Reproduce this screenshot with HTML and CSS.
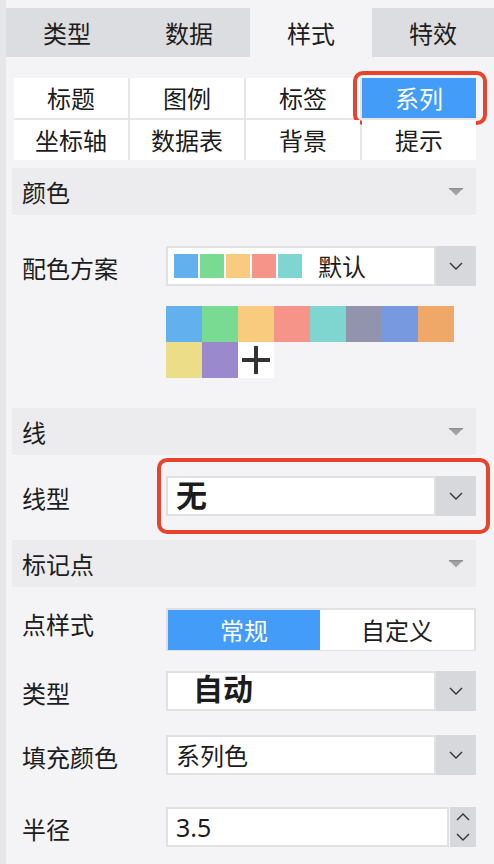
FILE: index.html
```html
<!DOCTYPE html>
<html lang="zh-CN">
<head>
<meta charset="utf-8">
<title>系列样式</title>
<link rel="stylesheet" href="styles.css">
</head>
<body>
<div class="app">
  <div class="top-tabs">
    <div class="top-tab">类型</div>
    <div class="top-tab">数据</div>
    <div class="top-tab active">样式</div>
    <div class="top-tab">特效</div>
  </div>
  <div class="panel">
    <div class="sub-tabs">
      <div class="sub-tab">标题</div>
      <div class="sub-tab">图例</div>
      <div class="sub-tab">标签</div>
      <div class="sub-tab active">系列<span class="mark mark-tab"></span></div>
      <div class="sub-tab">坐标轴</div>
      <div class="sub-tab">数据表</div>
      <div class="sub-tab">背景</div>
      <div class="sub-tab">提示</div>
    </div>

    <div class="section-head sh-color">
      <span>颜色</span>
      <svg class="tri" width="16" height="8" viewBox="0 0 16 8"><polygon points="1,0.5 15,0.5 8,7.5" fill="#a3a3a5"/><rect x="1" y="0" width="14" height="1.5" fill="#8f8f91"/></svg>
    </div>

    <div class="row row-scheme">
      <span class="label">配色方案</span>
      <div class="select">
        <div class="select-box scheme-box">
          <span class="sw sw-1"></span><span class="sw sw-2"></span><span class="sw sw-3"></span><span class="sw sw-4"></span><span class="sw sw-5"></span>
          <span class="scheme-name">默认</span>
        </div>
        <div class="select-btn">
          <svg width="14" height="8" viewBox="0 0 14 8"><polyline points="1,1 7,7 13,1" fill="none" stroke="#333" stroke-width="1.4"/></svg>
        </div>
      </div>
    </div>

    <div class="palette">
      <span class="pc sw-1"></span><span class="pc sw-2"></span><span class="pc sw-3"></span><span class="pc sw-4"></span>
      <span class="pc sw-5"></span><span class="pc sw-6"></span><span class="pc sw-7"></span><span class="pc sw-8"></span>
      <span class="pc sw-9"></span><span class="pc sw-10"></span>
      <span class="pc add">
        <svg width="28" height="28" viewBox="0 0 28 28"><rect x="0" y="12" width="28" height="4" fill="#333"/><rect x="12" y="0" width="4" height="28" fill="#333"/></svg>
      </span>
    </div>

    <div class="section-head sh-line">
      <span>线</span>
      <svg class="tri" width="16" height="8" viewBox="0 0 16 8"><polygon points="1,0.5 15,0.5 8,7.5" fill="#a3a3a5"/><rect x="1" y="0" width="14" height="1.5" fill="#8f8f91"/></svg>
    </div>

    <div class="row row-linetype">
      <span class="label">线型</span>
      <div class="select">
        <div class="select-box"><span class="val-big val-none">无</span></div>
        <div class="select-btn">
          <svg width="14" height="8" viewBox="0 0 14 8"><polyline points="1,1 7,7 13,1" fill="none" stroke="#333" stroke-width="1.4"/></svg>
        </div>
        <span class="mark mark-select"></span>
      </div>
    </div>

    <div class="section-head sh-marker">
      <span>标记点</span>
      <svg class="tri" width="16" height="8" viewBox="0 0 16 8"><polygon points="1,0.5 15,0.5 8,7.5" fill="#a3a3a5"/><rect x="1" y="0" width="14" height="1.5" fill="#8f8f91"/></svg>
    </div>

    <div class="row row-pointstyle">
      <span class="label label-top">点样式</span>
      <div class="segmented">
        <div class="seg active">常规</div>
        <div class="seg">自定义</div>
      </div>
    </div>

    <div class="row row-type">
      <span class="label">类型</span>
      <div class="select">
        <div class="select-box"><span class="val-big val-auto">自动</span></div>
        <div class="select-btn">
          <svg width="14" height="8" viewBox="0 0 14 8"><polyline points="1,1 7,7 13,1" fill="none" stroke="#333" stroke-width="1.4"/></svg>
        </div>
      </div>
    </div>

    <div class="row row-fill">
      <span class="label">填充颜色</span>
      <div class="select">
        <div class="select-box"><span class="val">系列色</span></div>
        <div class="select-btn">
          <svg width="14" height="8" viewBox="0 0 14 8"><polyline points="1,1 7,7 13,1" fill="none" stroke="#333" stroke-width="1.4"/></svg>
        </div>
      </div>
    </div>

    <div class="row row-radius">
      <span class="label">半径</span>
      <div class="number">
        <div class="number-box"><span class="val num">3.5</span></div>
        <div class="spinner">
          <svg width="14" height="8" viewBox="0 0 14 8"><polyline points="1,7 7,1 13,7" fill="none" stroke="#333" stroke-width="1.4"/></svg>
          <svg width="14" height="8" viewBox="0 0 14 8"><polyline points="1,1 7,7 13,1" fill="none" stroke="#333" stroke-width="1.4"/></svg>
        </div>
      </div>
    </div>
  </div>
</div>
</body>
</html>
```

FILE: styles.css
```css
* { box-sizing: border-box; }

html, body {
  margin: 0;
  padding: 0;
  background: #f4f4f6;
}

body {
  font-family: "Noto Sans CJK SC", "Noto Sans", "Liberation Sans", sans-serif;
  color: #1c1c1c;
  font-size: 24px;
}

.app {
  border-left: 6px solid #e7e7e9;
  padding-top: 8px;
  min-height: 864px;
}

.top-tabs {
  display: grid;
  grid-template-columns: repeat(4, 1fr);
  height: 49px;
}

.top-tab {
  background: #dcdde0;
  display: flex;
  align-items: center;
  justify-content: center;
  font-size: 24px;
  line-height: 1;
}

.top-tab.active {
  background: #f4f4f6;
}

.panel {
  padding: 21px 18px 0 6px;
}

.sub-tabs {
  margin-left: 2px;
  display: grid;
  grid-template-columns: repeat(4, 1fr);
  grid-auto-rows: 40px;
  gap: 2px;
  background: #e6e6e8;
}

.sub-tab {
  background: #ffffff;
  display: flex;
  align-items: center;
  justify-content: center;
  font-size: 24px;
  line-height: 1;
  position: relative;
}

.sub-tab.active {
  background: #429cf8;
  color: #ffffff;
}

.mark {
  position: absolute;
  border: 4px solid #e8432d;
  border-radius: 10px;
  pointer-events: none;
}

.mark-tab {
  top: -7px;
  left: -9px;
  right: -11px;
  bottom: -7px;
}

.mark-select {
  top: -18px;
  left: -9px;
  right: -14px;
  bottom: -18px;
}

.section-head {
  height: 47px;
  background: #ececee;
  display: flex;
  align-items: center;
  justify-content: space-between;
  padding: 0 12px 0 10px;
  font-size: 24px;
  line-height: 1;
}

.sh-color { margin-top: 8px; }
.sh-line { margin-top: 30px; }
.sh-marker { margin-top: 24px; }

.row {
  display: flex;
  align-items: center;
}

.label {
  width: 154px;
  padding-left: 10px;
  font-size: 24px;
  line-height: 1;
  flex: none;
  position: relative;
  top: 2px;
}

.label-top {
  align-self: flex-start;
  top: 4px;
}

.row-scheme { margin-top: 31px; }
.row-linetype { margin-top: 21px; }
.row-pointstyle { margin-top: 21px; }
.row-type { margin-top: 20px; }
.row-fill { margin-top: 24px; }
.row-radius { margin-top: 32px; }

.select {
  width: 310px;
  height: 40px;
  display: flex;
  position: relative;
}

.select-box {
  flex: 1;
  background: #ffffff;
  border: 2px solid #e1e1e3;
  display: flex;
  align-items: center;
  padding-left: 8px;
}

.select-btn {
  width: 40px;
  background: #d7d8db;
  display: flex;
  align-items: center;
  justify-content: center;
}

.scheme-box {
  padding-left: 6px;
  gap: 2px;
}

.sw {
  width: 24px;
  height: 24px;
  flex: none;
}

.sw-1 { background: #62b0ed; }
.sw-2 { background: #78db91; }
.sw-3 { background: #f8cb7f; }
.sw-4 { background: #f7948a; }
.sw-5 { background: #7fd6d0; }
.sw-6 { background: #9293ad; }
.sw-7 { background: #7799e0; }
.sw-8 { background: #f0a868; }
.sw-9 { background: #ecdd89; }
.sw-10 { background: #9a89cd; }

.scheme-name {
  margin-left: 14px;
  font-size: 24px;
  line-height: 1;
}

.palette {
  margin: 20px 0 0 154px;
  display: grid;
  grid-template-columns: repeat(8, 36px);
  grid-auto-rows: 36px;
}

.pc.add {
  background: #ffffff;
  display: flex;
  align-items: center;
  justify-content: center;
}

.val {
  font-size: 24px;
  line-height: 1;
}

.val-big {
  font-weight: 700;
  line-height: 1;
}

.val-none {
  font-size: 31px;
  position: relative;
  top: -3px;
}

.val-auto {
  font-size: 30px;
  margin-left: 17px;
  position: relative;
  top: -4px;
}

.num {
  font-family: "Noto Sans", "Liberation Sans", sans-serif;
  font-size: 25px;
}

.segmented {
  width: 310px;
  height: 43px;
  border: 2px solid #e1e1e3;
  border-bottom-width: 1px;
  background: #ffffff;
  display: flex;
}

.seg {
  flex: 1;
  display: flex;
  align-items: center;
  justify-content: center;
  font-size: 24px;
  line-height: 1;
}

.seg.active {
  flex: none;
  width: 152px;
  background: #429cf8;
  color: #ffffff;
}

.number {
  width: 310px;
  height: 40px;
  display: flex;
}

.number-box {
  flex: 1;
  background: #ffffff;
  border: 2px solid #e1e1e3;
  display: flex;
  align-items: center;
  padding-left: 8px;
  margin-right: 1px;
}

.spinner {
  width: 26px;
  background: #d7d8db;
  display: flex;
  flex-direction: column;
  align-items: center;
  justify-content: center;
  gap: 12px;
}
```
